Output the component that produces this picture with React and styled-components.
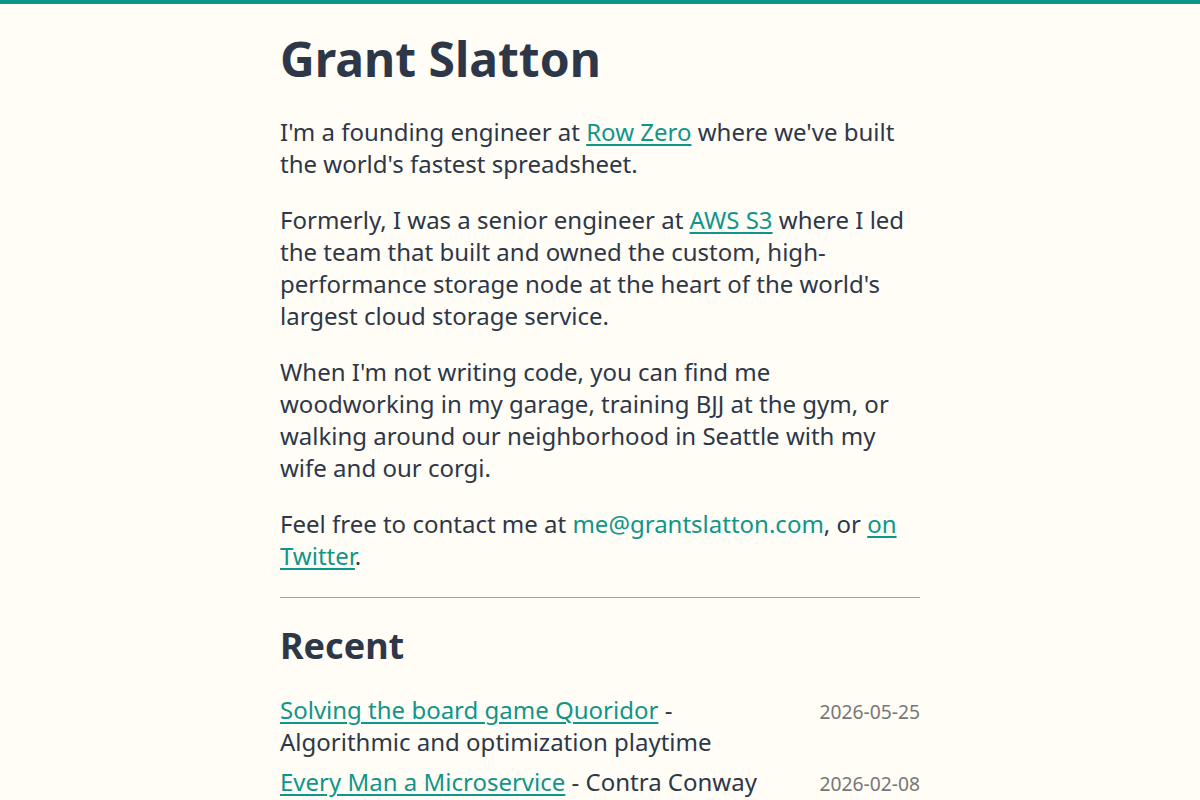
import React from "react";
import styled, { createGlobalStyle } from "styled-components";

const GlobalStyle = createGlobalStyle`
  html, body {
    margin: 0;
    padding: 0;
    background: #fffdf6;
  }
  body {
    border-top: 4px solid #0d9488;
    font-family: "Noto Sans", "DejaVu Sans", sans-serif;
    color: #2d3748;
  }
`;

const Page = styled.main`
  max-width: 640px;
  margin: 0 auto;
  padding: 26px 0 40px;
`;

const Title = styled.h1`
  font-size: 48px;
  font-weight: 700;
  line-height: 1.2;
  margin: 0 0 28px;
  color: #2d3748;
`;

const Para = styled.p`
  font-size: 24px;
  line-height: 32px;
  margin: 0 0 24px;
`;

const Link = styled.a`
  color: #0f968a;
  text-decoration: ${(p) => (p.$plain ? "none" : "underline")};
  text-underline-offset: 3px;
  text-decoration-thickness: 1.5px;
`;

const Rule = styled.hr`
  border: none;
  border-top: 1px solid #a0a0a0;
  margin: 25px 0 26px;
`;

const SectionTitle = styled.h2`
  font-size: 36px;
  font-weight: 700;
  line-height: 1.2;
  margin: 0 0 27px;
`;

const PostList = styled.ul`
  list-style: none;
  margin: 0;
  padding: 0;
  display: flex;
  flex-direction: column;
  gap: 8px;
`;

const PostRow = styled.li`
  display: flex;
  justify-content: space-between;
  align-items: baseline;
  gap: 40px;
  font-size: 24px;
  line-height: 32px;
`;

const PostText = styled.span`
  flex: 1;
`;

const PostDate = styled.time`
  font-size: 19.25px;
  color: #777777;
  white-space: nowrap;
`;

const posts = [
  {
    title: "Solving the board game Quoridor",
    blurb: "Algorithmic and optimization playtime",
    date: "2026-05-25",
  },
  {
    title: "Every Man a Microservice",
    blurb: "Contra Conway",
    date: "2026-02-08",
  },
];

export default function App() {
  return (
    <>
      <GlobalStyle />
      <Page>
        <Title>Grant Slatton</Title>
        <Para>
          I'm a founding engineer at <Link href="#">Row Zero</Link> where we've
          built the world's fastest spreadsheet.
        </Para>
        <Para>
          Formerly, I was a senior engineer at <Link href="#">AWS S3</Link> where
          I led the team that built and owned the custom, high-performance
          storage node at the heart of the world's largest cloud storage
          service.
        </Para>
        <Para>
          When I'm not writing code, you can find me woodworking in my garage,
          training BJJ at the gym, or walking around our neighborhood in Seattle
          with my wife and our corgi.
        </Para>
        <Para>
          Feel free to contact me at{" "}
          <Link $plain href="#">
            me@grantslatton.com
          </Link>
          , or <Link href="#">on Twitter</Link>.
        </Para>
        <Rule />
        <SectionTitle>Recent</SectionTitle>
        <PostList>
          {posts.map((p) => (
            <PostRow key={p.title}>
              <PostText>
                <Link href="#">{p.title}</Link> - {p.blurb}
              </PostText>
              <PostDate>{p.date}</PostDate>
            </PostRow>
          ))}
        </PostList>
      </Page>
    </>
  );
}
